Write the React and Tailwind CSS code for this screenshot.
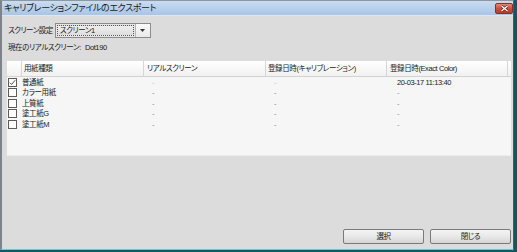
import React from "react";

const rows = [
  { name: "普通紙", checked: true, real: "-", calib: "-", exact: "20-03-17 11:13:40", faint: true },
  { name: "カラー用紙", real: "-", calib: "-", exact: "-" },
  { name: "上質紙", real: "-", calib: "-", exact: "-" },
  { name: "塗工紙G", real: "-", calib: "-", exact: "-" },
  { name: "塗工紙M", real: "-", calib: "-", exact: "-" },
];

const Checkbox = ({ checked }) => (
  <div className="w-[9px] h-[9px] border border-[#5c5c5c] bg-white flex items-center justify-center">
    {checked && (
      <svg width="7" height="7" viewBox="0 0 7 7">
        <path d="M0.8 3.6 L2.6 5.4 L6.2 1.2" fill="none" stroke="#3a3a3a" strokeWidth="0.9" />
      </svg>
    )}
  </div>
);

const Button = ({ children }) => (
  <button className="w-[81px] h-[15px] rounded-[2px] border border-[#7a7a7a] bg-gradient-to-b from-[#f4f4f4] via-[#e8e8e8] to-[#d6d6d6] text-[#1a1a1a] flex items-center justify-center">
    {children}
  </button>
);

export default function App() {
  return (
    <div className="w-[517px] h-[252px] bg-[#0f5964] font-['Liberation_Sans','Noto_Sans_CJK_JP',sans-serif] [font-feature-settings:'palt'] text-[#1a1a1a] whitespace-nowrap">
      <div className="w-[514px] h-[250px] flex flex-col bg-[#dcdcdc] border-l-2 border-l-[#7d8388] border-t border-t-[#8e979e] border-r border-r-[#4f5a60] border-b border-b-[#6fc3d3]">
        {/* Title bar */}
        <div className="h-[15px] flex items-center justify-between bg-gradient-to-b from-[#c9dcf1] to-[#a9c5e6] border-b border-b-[#dce7f4]">
          <span className="pl-[2px] text-[9px] leading-none tracking-[-0.35px]">キャリブレーションファイルのエクスポート</span>
          <div className="w-[18px] h-[11px] rounded-[2px] border border-[#8a2f22] bg-gradient-to-b from-[#e08a78] via-[#c9503c] to-[#b83c2a] flex items-center justify-center">
            <svg width="9" height="7" viewBox="0 0 9 7">
              <path d="M1.5 1 L7.5 6 M7.5 1 L1.5 6" stroke="#5a1a12" strokeWidth="2.6" />
              <path d="M1.5 1 L7.5 6 M7.5 1 L1.5 6" stroke="#ffffff" strokeWidth="1.4" />
            </svg>
          </div>
        </div>

        {/* Content */}
        <div className="flex-1 flex flex-col pl-[5px] pr-[2px] text-[7.5px] leading-none tracking-[-0.4px]">
          <div className="mt-[7px] h-[15px] flex items-center">
            <span className="pl-[1px] mr-[2px] tracking-[-0.5px]">スクリーン設定</span>
            <div className="flex h-[15px] w-[96px] border border-[#8b8b8b] bg-[#e6e6e6]">
              <div className="flex-1 m-[1px] border border-dotted border-[#555] flex items-center pl-[2px] bg-gradient-to-b from-[#eeeeee] to-[#dedede]">
                スクリーン1
              </div>
              <div className="w-[15px] border-l border-[#b5b5b5] flex items-center justify-center bg-gradient-to-b from-[#fafafa] to-[#e9e9e9]">
                <svg width="5" height="3" viewBox="0 0 5 3">
                  <path d="M0 0 L5 0 L2.5 3 Z" fill="#333" />
                </svg>
              </div>
            </div>
          </div>

          <div className="mt-[5px] h-[10px] flex items-center pl-[1px]">
            <span className="mr-[4px]">現在のリアルスクリーン:</span>
            <span>Dot190</span>
          </div>

          {/* Table */}
          <div className="mt-[8px] flex flex-col bg-[#f6f6f6] border-b border-b-[#ececec]">
            <div className="h-[16px] flex bg-gradient-to-b from-white to-[#f1f1f1] border-b border-b-[#d2d2d2]">
              <div className="w-[15px] border-r border-r-[#d6d6d6]" />
              <div className="w-[122px] border-r border-r-[#d6d6d6] flex items-center pl-[2px]">用紙種類</div>
              <div className="w-[122px] border-r border-r-[#d6d6d6] flex items-center pl-[3px]">リアルスクリーン</div>
              <div className="w-[121px] border-r border-r-[#d6d6d6] flex items-center pl-[2px]">登録日時(キャリブレーション)</div>
              <div className="w-[121px] border-r border-r-[#d6d6d6] flex items-center pl-[3px]">登録日時(Exact Color)</div>
              <div className="flex-1" />
            </div>
            <div className="h-[78px] flex flex-col">
              {rows.map((r) => (
                <div key={r.name} className="h-[10.5px] flex items-center">
                  <div className="w-[15px] pl-[1px]">
                    <Checkbox checked={r.checked} />
                  </div>
                  <div className="w-[122px]">{r.name}</div>
                  <div className={`w-[122px] pl-[8px] ${r.faint ? "text-[#c4c4c4]" : "text-[#8a8a8a]"}`}>{r.real}</div>
                  <div className={`w-[121px] pl-[8px] ${r.faint ? "text-[#c4c4c4]" : "text-[#8a8a8a]"}`}>{r.calib}</div>
                  <div className={`w-[121px] pl-[10px] ${r.faint ? "text-[#1a1a1a]" : "text-[#8a8a8a]"}`}>{r.exact}</div>
                </div>
              ))}
            </div>
          </div>

          <div className="flex-1" />

          <div className="mb-[5px] flex justify-end gap-[6px]">
            <Button>選択</Button>
            <Button>閉じる</Button>
          </div>
        </div>
      </div>
    </div>
  );
}
